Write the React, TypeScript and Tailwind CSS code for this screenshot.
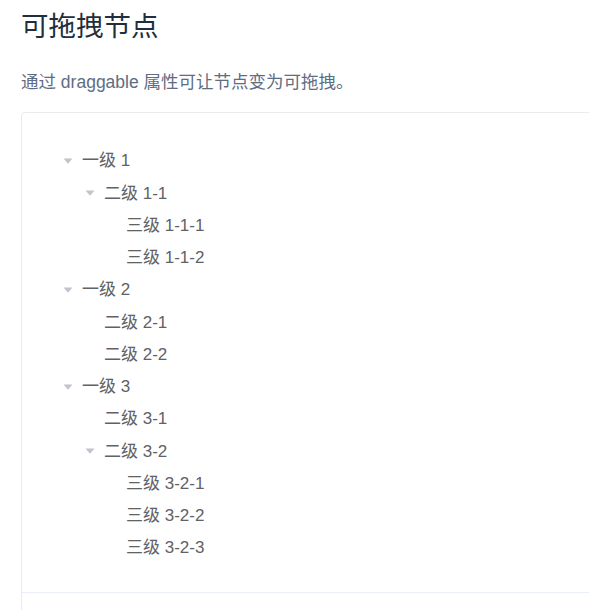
import React from 'react';

type Node = { label: string; level: 1 | 2 | 3; open?: boolean };

const nodes: Node[] = [
  { label: '一级 1', level: 1, open: true },
  { label: '二级 1-1', level: 2, open: true },
  { label: '三级 1-1-1', level: 3 },
  { label: '三级 1-1-2', level: 3 },
  { label: '一级 2', level: 1, open: true },
  { label: '二级 2-1', level: 2 },
  { label: '二级 2-2', level: 2 },
  { label: '一级 3', level: 1, open: true },
  { label: '二级 3-1', level: 2 },
  { label: '二级 3-2', level: 2, open: true },
  { label: '三级 3-2-1', level: 3 },
  { label: '三级 3-2-2', level: 3 },
  { label: '三级 3-2-3', level: 3 },
];

const indent = { 1: 'pl-[41px]', 2: 'pl-[63px]', 3: 'pl-[85px]' };

function Caret() {
  return (
    <svg width="10" height="6" viewBox="0 0 10 6">
      <polygon points="0.5,0.5 9.5,0.5 5,5.8" fill="#c0c4cc" />
    </svg>
  );
}

export default function App() {
  return (
    <div className="w-[589px] h-[610px] overflow-hidden bg-white font-['Liberation_Sans','Noto_Sans_CJK_SC',sans-serif]">
      <div className="pl-[21px] pt-[13px]">
        {/* Title */}
        <h3 className="text-[27.5px] leading-[28px] text-[#1f2f3d] font-normal">可拖拽节点</h3>
        <p className="mt-[28px] text-[17.5px] leading-[26px] text-[#5e6d82]">
          通过 draggable 属性可让节点变为可拖拽。
        </p>

        {/* Demo card */}
        <div className="mt-[17px] w-[700px] border border-[#ebebeb] rounded-tl-[4px]">
          <div className="pt-[32px] pb-[28px]">
            {nodes.map((n) => (
              <div
                key={n.label}
                className={`h-[32.25px] flex items-center text-[17px] text-[#606266] ${indent[n.level]}`}
              >
                <span className="w-[19px] flex items-center">{n.open ? <Caret /> : null}</span>
                <span>{n.label}</span>
              </div>
            ))}
          </div>
          <div className="h-[44px] border-t border-[#eaeefb]" />
        </div>
      </div>
    </div>
  );
}
